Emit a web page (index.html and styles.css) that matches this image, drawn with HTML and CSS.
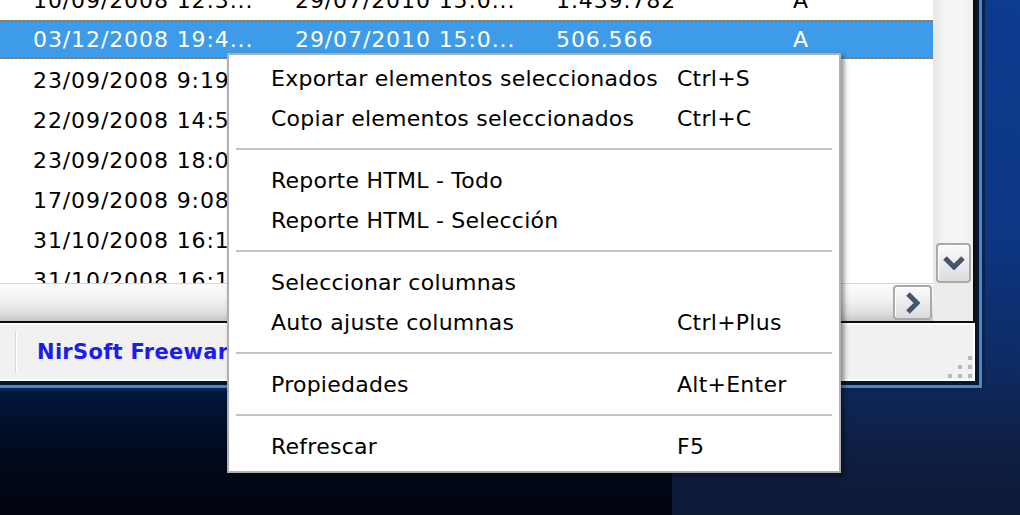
FILE: index.html
```html
<!DOCTYPE html>
<html lang="es">
<head>
<meta charset="utf-8">
<title>Lista</title>
<link rel="stylesheet" href="styles.css">
</head>
<body>
<div class="desktop">
  <div class="window">
    <div class="frame-mid">
      <div class="frame-in">
        <div class="client">
          <div class="listarea">
            <div class="listmain">
              <div class="rows">
                <div class="rows-inner">
                  <div class="row"><span class="cell">10/09/2008 12:3...</span><span class="cell">29/07/2010 15:0...</span><span class="cell">1.439.782</span><span class="cell">A</span></div>
                  <div class="row selected"><span class="cell">03/12/2008 19:4...</span><span class="cell">29/07/2010 15:0...</span><span class="cell">506.566</span><span class="cell">A</span></div>
                  <div class="row"><span class="cell">23/09/2008 9:19</span></div>
                  <div class="row"><span class="cell">22/09/2008 14:5</span></div>
                  <div class="row"><span class="cell">23/09/2008 18:0</span></div>
                  <div class="row"><span class="cell">17/09/2008 9:08</span></div>
                  <div class="row"><span class="cell">31/10/2008 16:1</span></div>
                  <div class="row"><span class="cell">31/10/2008 16:1</span></div>
                </div>
              </div>
              <div class="vscroll">
                <div class="vtrack"></div>
                <div class="sbtn sbtn-down">
                  <svg width="22" height="14" viewBox="0 0 22 14"><path d="M2 2 L11 11 L20 2" fill="none" stroke="#46546c" stroke-width="5"/></svg>
                </div>
              </div>
            </div>
            <div class="hscroll">
              <div class="htrack">
                <div class="sbtn sbtn-right">
                  <svg width="15" height="22" viewBox="0 0 15 22"><path d="M3 2 L12 11 L3 20" fill="none" stroke="#46546c" stroke-width="5"/></svg>
                </div>
              </div>
              <div class="corner"></div>
            </div>
          </div>
          <div class="statusbar">
            <div class="panel-first"></div>
            <div class="panel-sep"></div>
            <div class="panel-link">NirSoft Freeware</div>
            <div class="grip">
              <i></i><i></i><i class="dot"></i>
              <i></i><i class="dot"></i><i class="dot"></i>
              <i class="dot"></i><i class="dot"></i><i class="dot"></i>
            </div>
          </div>
        </div>
      </div>
    </div>
  </div>

  <div class="menu">
    <div class="item"><span>Exportar elementos seleccionados</span><span>Ctrl+S</span></div>
    <div class="item"><span>Copiar elementos seleccionados</span><span>Ctrl+C</span></div>
    <div class="sep"></div>
    <div class="item"><span>Reporte HTML - Todo</span><span></span></div>
    <div class="item"><span>Reporte HTML - Selección</span><span></span></div>
    <div class="sep"></div>
    <div class="item"><span>Seleccionar columnas</span><span></span></div>
    <div class="item"><span>Auto ajuste columnas</span><span>Ctrl+Plus</span></div>
    <div class="sep"></div>
    <div class="item"><span>Propiedades</span><span>Alt+Enter</span></div>
    <div class="sep"></div>
    <div class="item"><span>Refrescar</span><span>F5</span></div>
  </div>
</div>
</body>
</html>
```

FILE: styles.css
```css
* { box-sizing: border-box; }

html, body {
  margin: 0;
  padding: 0;
  width: 1020px;
  height: 515px;
  overflow: hidden;
}

body {
  font-family: "DejaVu Sans", "Noto Sans", sans-serif;
  font-size: 22px;
  color: #000;
}

.desktop {
  position: relative;
  width: 1020px;
  height: 515px;
  background:
    linear-gradient(180deg, #01173e 0%, #000b20 45%, #00040e 100%) left bottom / 672px 125px no-repeat,
    linear-gradient(180deg, #0c3c8f 0%, #0d3684 45%, #0e2a62 72%, #0e2148 84%, #0e1935 100%);
}

/* window frame */
.window {
  width: 985px;
  height: 391px;
  border-right: 3px solid #0a2452;
  border-bottom: 3px solid #0a2452;
}
.frame-mid {
  height: 100%;
  border-right: 3px solid #4688cc;
  border-bottom: 3px solid #4688cc;
}
.frame-in {
  height: 100%;
  border-right: 4px solid #08162e;
  border-bottom: 4px solid #08162e;
}
.client {
  height: 100%;
  display: flex;
  flex-direction: column;
  background: #f0f0f0;
}

/* list view */
.listarea {
  height: 323px;
  display: flex;
  flex-direction: column;
  border-right: 2px solid #0c0c0c;
  border-bottom: 2px solid #0c0c0c;
  background: #fff;
}
.listmain {
  height: 283px;
  display: flex;
}
.rows {
  width: 933px;
  overflow: hidden;
  background: #fff;
}
.rows-inner {
  margin-top: -20px;
}
.row {
  height: 40px;
  display: grid;
  grid-template-columns: 262px 261px 237px 1fr;
  align-items: center;
  padding-left: 33px;
  letter-spacing: 0.9px;
  white-space: nowrap;
}
.cell {
  overflow: hidden;
}
.row.selected {
  height: 39px;
  margin-bottom: 1px;
  background: #3d9be7;
  color: #fff;
  border-top: 2px dotted #c8661e;
  border-bottom: 2px dotted #c8661e;
}

.vscroll {
  width: 40px;
  display: flex;
  flex-direction: column;
  background: linear-gradient(90deg, #e6e6e6 0%, #f3f3f3 25%, #f6f6f6 70%, #efefef 100%);
}
.vtrack { flex: 1; }

.sbtn {
  display: flex;
  align-items: center;
  justify-content: center;
  border: 2px solid #a9a9a9;
  border-radius: 4px;
  background: linear-gradient(180deg, #fbfbfb 0%, #ececec 50%, #dcdcdc 100%);
  box-shadow: inset 1px 1px 0 #fff;
}
.sbtn-down {
  width: 35px;
  height: 40px;
  margin: 0 2px 0 3px;
}

.hscroll {
  height: 38px;
  display: flex;
}
.htrack {
  width: 933px;
  display: flex;
  justify-content: flex-end;
  align-items: center;
  padding-right: 1px;
  border-top: 1px solid #d6d6d6;
  background: linear-gradient(180deg, #fdfdfd 0%, #f1f1f1 45%, #dedede 80%, #c6c6c6 100%);
}
.sbtn-right {
  width: 39px;
  height: 35px;
}
.corner {
  flex: 1;
  background: #ececec;
}

/* status bar */
.statusbar {
  flex: 1;
  display: flex;
  align-items: center;
  border-top: 2px solid #ffffff;
  border-bottom: 2px solid #ffffff;
  border-right: 2px solid #ffffff;
  background: #f1f1f1;
  white-space: nowrap;
  overflow: hidden;
}
.panel-first { width: 15px; }
.panel-sep {
  width: 2px;
  height: 40px;
  background: #d7d7d7;
  border-right: 1px solid #fff;
}
.panel-link {
  flex: 1;
  padding-left: 20px;
  font-weight: bold;
  font-size: 21px;
  color: #1c1cf0;
  letter-spacing: 0.3px;
}
.grip {
  align-self: flex-end;
  margin: 0 1px 1px 0;
  display: grid;
  grid-template-columns: repeat(3, 4px);
  grid-auto-rows: 4px;
  column-gap: 6px;
  row-gap: 5px;
}
.grip i { display: block; }
.grip i.dot { background: #b9b9b9; }

/* context menu */
.menu {
  position: absolute;
  left: 227px;
  top: 53px;
  width: 614px;
  padding: 3px 0 5px;
  background: #fff;
  border: 2px solid #b0b0b0;
  box-shadow: 3px 3px 5px rgba(0, 0, 0, 0.45);
  letter-spacing: 0.25px;
}
.item {
  height: 40px;
  display: grid;
  grid-template-columns: 406px 1fr;
  align-items: center;
  padding-left: 42px;
  white-space: nowrap;
}
.sep {
  height: 22px;
  display: flex;
  align-items: center;
  padding: 0 7px;
}
.sep::before {
  content: "";
  flex: 1;
  height: 2px;
  background: #c3c3c3;
}
```
